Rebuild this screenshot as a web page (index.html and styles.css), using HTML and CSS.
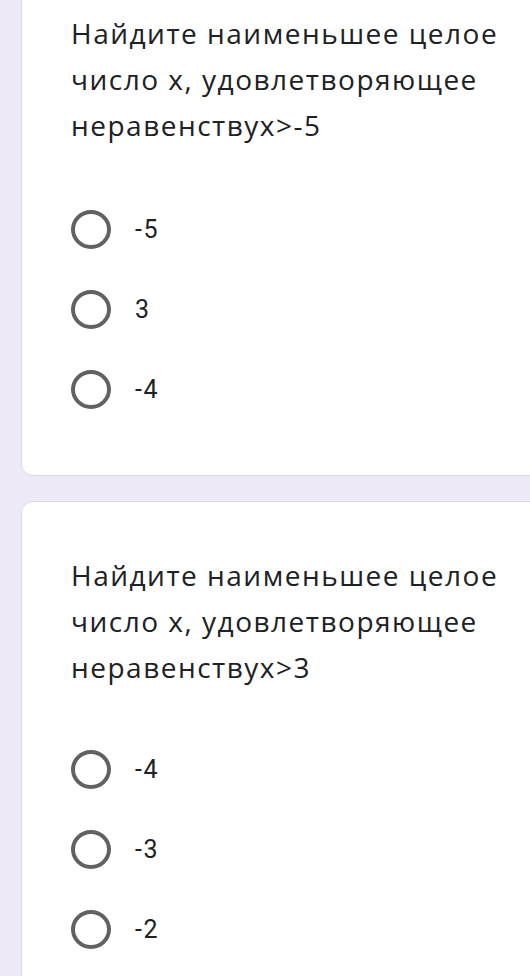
FILE: index.html
```html
<!DOCTYPE html>
<html lang="ru">
<head>
<meta charset="utf-8">
<link rel="stylesheet" href="styles.css">
</head>
<body>
<div class="page">
  <section class="card card-first">
    <div class="question">Найдите наименьшее целое число x, удовлетворяющее неравенствух&gt;-5</div>
    <div class="options">
      <div class="option"><span class="radio"></span><span class="label">-5</span></div>
      <div class="option"><span class="radio"></span><span class="label">3</span></div>
      <div class="option"><span class="radio"></span><span class="label">-4</span></div>
    </div>
  </section>
  <section class="card">
    <div class="question">Найдите наименьшее целое число x, удовлетворяющее неравенствух&gt;3</div>
    <div class="options">
      <div class="option"><span class="radio"></span><span class="label">-4</span></div>
      <div class="option"><span class="radio"></span><span class="label">-3</span></div>
      <div class="option"><span class="radio"></span><span class="label">-2</span></div>
    </div>
  </section>
</div>
</body>
</html>
```

FILE: styles.css
```css
html, body {
  margin: 0;
  padding: 0;
  overflow: hidden;
  background: #ede9f7;
}
body {
  width: 530px;
  height: 976px;
}
.page {
  display: flex;
  flex-direction: column;
  gap: 25px;
  padding-left: 21px;
}
.card {
  background: #ffffff;
  border: 1px solid #dcd9e3;
  border-radius: 12px;
  margin-right: -40px;
  padding: 50px 0 46px 49px;
  color: #202124;
}
.card-first {
  margin-top: -30px;
  padding-top: 39px;
}
.card-first .options {
  margin-top: 41px;
}
.question {
  font-family: "Open Sans", Roboto, sans-serif;
  font-size: 28px;
  line-height: 46px;
  width: 460px;
  letter-spacing: 1.5px;
}
.options {
  margin-top: 39px;
  display: flex;
  flex-direction: column;
}
.option {
  height: 80px;
  display: flex;
  align-items: center;
}
.radio {
  box-sizing: border-box;
  width: 40px;
  height: 39px;
  border: 4px solid #616161;
  border-radius: 50%;
  flex: none;
}
.label {
  margin-left: 24px;
  font-family: Roboto, "Noto Sans", sans-serif;
  font-size: 25px;
  letter-spacing: 1.5px;
  color: #202124;
}
```
